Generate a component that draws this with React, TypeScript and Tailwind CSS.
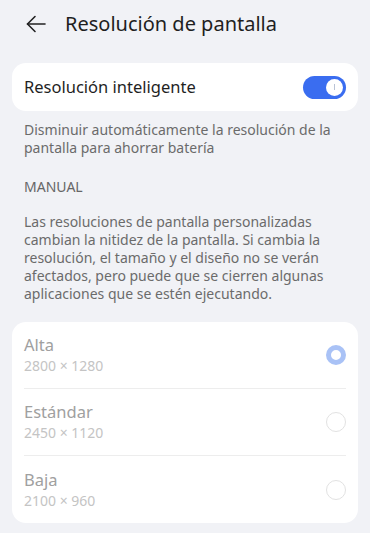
import React from 'react';

const options = [
  { name: 'Alta', size: '2800 × 1280', selected: true },
  { name: 'Estándar', size: '2450 × 1120', selected: false },
  { name: 'Baja', size: '2100 × 960', selected: false },
];

export default function App() {
  return (
    <div
      className="min-h-[533px] w-[370px] bg-[#f1f2f6] text-[#1a1a1a]"
      style={{ fontFamily: '"Noto Sans", "Open Sans", sans-serif' }}
    >
      {/* Header */}
      <div className="flex h-[48px] items-center pl-[26px]">
        <svg width="20" height="18" viewBox="0 0 20 18" fill="none" stroke="#222" strokeWidth="1.6" strokeLinecap="round" strokeLinejoin="round">
          <path d="M19 9H1.5" />
          <path d="M9 1.5L1.5 9L9 16.5" />
        </svg>
        <span className="ml-[19px] text-[20px] leading-none text-[#1f1f1f]">Resolución de pantalla</span>
      </div>

      {/* Smart resolution */}
      <div className="mx-[12px] mt-[15px] flex h-[48px] items-center justify-between rounded-[14px] bg-white pl-[12px] pr-[12px]">
        <span className="text-[16.5px] text-[#1f1f1f]">Resolución inteligente</span>
        <div className="flex h-[23px] w-[43px] items-center justify-end rounded-full bg-[#3a6df0] pr-[3px]">
          <div className="flex h-[17px] w-[17px] items-center justify-center rounded-full bg-white">
            <div className="h-[6px] w-[1px] bg-[#b9c3d6]" />
          </div>
        </div>
      </div>

      <p className="mt-[10px] px-[24px] text-[14px] leading-[18px] text-[#6b6b6b]">
        Disminuir automáticamente la resolución de la pantalla para ahorrar batería
      </p>

      <div className="mt-[21px] px-[24px] text-[14px] leading-[18px] text-[#666]">MANUAL</div>

      <p className="mt-[17px] px-[24px] text-[14px] leading-[18px] text-[#6b6b6b]">
        Las resoluciones de pantalla personalizadas cambian la nitidez de la pantalla. Si cambia la resolución, el tamaño y el diseño no se verán afectados, pero puede que se cierren algunas aplicaciones que se estén ejecutando.
      </p>

      {/* Options */}
      <div className="mx-[12px] mt-[19px] rounded-[14px] bg-white px-[12px]">
        {options.map((o, i) => (
          <div key={o.name} className={`flex h-[67px] items-center justify-between ${i < options.length - 1 ? 'border-b border-[#ededed]' : ''}`}>
            <div className="flex flex-col">
              <span className="text-[16.5px] leading-[22px] text-[#a0a0a0]">{o.name}</span>
              <span className="text-[14px] leading-[20px] text-[#c4c4c4]">{o.size}</span>
            </div>
            {o.selected ? (
              <div className="h-[20px] w-[20px] rounded-full border-[5px] border-[#a9c2f6] bg-white" />
            ) : (
              <div className="h-[20px] w-[20px] rounded-full border border-[#e2e2e2] bg-white" />
            )}
          </div>
        ))}
      </div>
    </div>
  );
}
